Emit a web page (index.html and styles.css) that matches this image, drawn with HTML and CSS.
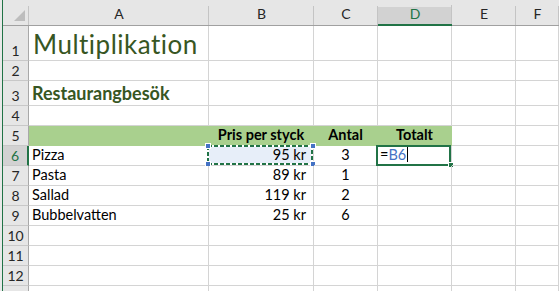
FILE: index.html
```
<!DOCTYPE html>
<html lang="sv">
<head>
<meta charset="utf-8">
<title>Multiplikation</title>
<link rel="stylesheet" href="styles.css">
</head>
<body>
<div class="sheet">
  <div class="edge"></div>

  <div class="corner"><span class="tri"></span></div>
  <div class="colh">A</div>
  <div class="colh">B</div>
  <div class="colh">C</div>
  <div class="colh sel">D</div>
  <div class="colh">E</div>
  <div class="colh">F</div>

  <div class="rowh">1</div>
  <div class="c title">Multiplikation</div>
  <div class="c"></div><div class="c"></div><div class="c"></div><div class="c"></div><div class="c"></div>

  <div class="rowh">2</div>
  <div class="c"></div><div class="c"></div><div class="c"></div><div class="c"></div><div class="c"></div><div class="c"></div>

  <div class="rowh">3</div>
  <div class="c heading">Restaurangbesök</div>
  <div class="c"></div><div class="c"></div><div class="c"></div><div class="c"></div><div class="c"></div>

  <div class="rowh">4</div>
  <div class="c"></div><div class="c"></div><div class="c"></div><div class="c"></div><div class="c"></div><div class="c"></div>

  <div class="rowh">5</div>
  <div class="c band"></div>
  <div class="c band th">Pris per styck</div>
  <div class="c band th">Antal</div>
  <div class="c band th">Totalt</div>
  <div class="c"></div><div class="c"></div>

  <div class="rowh sel">6</div>
  <div class="c">Pizza</div>
  <div class="c num ref">95 kr
    <svg class="marquee" width="106" height="20" viewBox="0 0 106 20"><rect x="1" y="1" width="104" height="18" fill="none" stroke="#ffffff" stroke-width="2"/><rect x="1" y="1" width="104" height="18" fill="none" stroke="#217346" stroke-width="2" stroke-dasharray="4 2"/></svg>
    <span class="hdl tl"></span><span class="hdl tr"></span><span class="hdl bl"></span><span class="hdl br"></span>
  </div>
  <div class="c mid">3</div>
  <div class="c active"><span class="eq">=</span><span class="refx">B6</span><span class="caret"></span><span class="fill"></span></div>
  <div class="c"></div><div class="c"></div>

  <div class="rowh">7</div>
  <div class="c">Pasta</div><div class="c num">89 kr</div><div class="c mid">1</div><div class="c"></div><div class="c"></div><div class="c"></div>

  <div class="rowh">8</div>
  <div class="c">Sallad</div><div class="c num">119 kr</div><div class="c mid">2</div><div class="c"></div><div class="c"></div><div class="c"></div>

  <div class="rowh">9</div>
  <div class="c">Bubbelvatten</div><div class="c num">25 kr</div><div class="c mid">6</div><div class="c"></div><div class="c"></div><div class="c"></div>

  <div class="rowh">10</div>
  <div class="c"></div><div class="c"></div><div class="c"></div><div class="c"></div><div class="c"></div><div class="c"></div>

  <div class="rowh">11</div>
  <div class="c"></div><div class="c"></div><div class="c"></div><div class="c"></div><div class="c"></div><div class="c"></div>

  <div class="rowh">12</div>
  <div class="c"></div><div class="c"></div><div class="c"></div><div class="c"></div><div class="c"></div><div class="c"></div>

  <div class="rowh"></div>
  <div class="c"></div><div class="c"></div><div class="c"></div><div class="c"></div><div class="c"></div><div class="c"></div>
</div>
</body>
</html>
```

FILE: styles.css
```
* { box-sizing: border-box; }
html, body { margin: 0; padding: 0; background: #ffffff; overflow: hidden; }
body { width: 559px; height: 291px; font-family: Lato, "Liberation Sans", sans-serif; }

.sheet {
  display: grid;
  grid-template-columns: 3px 26px 180px 105px 64px 74px 64px 1fr;
  grid-template-rows: 26px 35px 20px 25px 20px 20px 20px 20px 20px 20px 20px 20px 20px 20px;
  width: 559px;
  height: 291px;
  overflow: hidden;
}

.edge {
  grid-row: 1 / -1;
  grid-column: 1;
  background: #e9e9e9;
  border-right: 1px solid #217346;
}

.corner {
  background: linear-gradient(#c4c4c4, #c4c4c4) right bottom / 1px 19px no-repeat, #e6e6e6;
  border-bottom: 1px solid #a0a0a0;
  display: flex;
  justify-content: flex-end;
  align-items: flex-end;
  padding: 0 4px 4px 0;
}
.tri {
  width: 11px;
  height: 11px;
  background: #bdbdbd;
  clip-path: polygon(100% 0, 100% 100%, 0 100%);
}

.colh {
  background: linear-gradient(#c4c4c4, #c4c4c4) right bottom / 1px 19px no-repeat, #e6e6e6;
  border-bottom: 1px solid #a0a0a0;
  display: flex;
  justify-content: center;
  align-items: flex-end;
  padding-bottom: 3px;
  font-size: 14px;
  line-height: 16px;
  color: #262626;
}
.colh.sel {
  background: linear-gradient(#c4c4c4, #c4c4c4) right bottom / 1px 19px no-repeat, linear-gradient(#d2d2d2, #d2d2d2) left 7px / 100% 19px no-repeat, #e6e6e6;
  border-bottom: 2px solid #217346;
  color: #217346;
  padding-bottom: 2px;
}

.rowh {
  background: #e6e6e6;
  border-right: 1px solid #a8a8a8;
  border-bottom: 1px solid #c8c8c8;
  display: flex;
  justify-content: center;
  align-items: flex-end;
  padding-bottom: 1px;
  font-size: 14px;
  line-height: 17px;
  color: #262626;
}
.rowh.sel {
  background: #d2d2d2;
  color: #217346;
  border-right: 2px solid #217346;
}

.c {
  border-right: 1px solid #d4d4d4;
  border-bottom: 1px solid #d4d4d4;
  display: flex;
  align-items: flex-end;
  padding: 0 3px 2px;
  font-size: 14.5px;
  line-height: 17px;
  color: #000000;
  white-space: nowrap;
  position: relative;
}
.c.num { justify-content: flex-end; padding-right: 7px; }
.c.mid { justify-content: center; }

.c.title {
  font-size: 26px;
  line-height: 32px;
  font-weight: 400;
  color: #375623;
  padding-left: 4px;
  padding-bottom: 0;
  letter-spacing: 0.5px;
}
.c.heading {
  font-size: 18px;
  line-height: 22px;
  font-weight: 700;
  color: #375623;
  padding-left: 3px;
  padding-bottom: 1px;
}

.c.band {
  background: #a9d08e;
  border-color: #a9d08e;
}
.c.th { justify-content: center; font-weight: 700; }

.c.ref { background: #e7eef9; }
.marquee { position: absolute; left: -2px; top: -1px; }
.hdl {
  position: absolute;
  width: 6px;
  height: 6px;
  background: #4472c4;
  border: 1px solid #ffffff;
}
.hdl.tl { left: -4px; top: -3px; }
.hdl.tr { right: -3px; top: -3px; }
.hdl.bl { left: -4px; bottom: -2px; }
.hdl.br { right: -3px; bottom: -2px; }

.c.active { padding-left: 2px; }
.c.active::before {
  content: "";
  position: absolute;
  left: -2px;
  top: -1px;
  right: 0;
  bottom: -1px;
  border: 2px solid #217346;
}
.refx { color: #4472c4; }
.caret {
  display: inline-block;
  width: 1px;
  height: 15px;
  background: #000000;
  margin-left: 1px;
  align-self: flex-end;
  margin-bottom: 1px;
}
.fill {
  position: absolute;
  right: -3px;
  bottom: -3px;
  width: 6px;
  height: 6px;
  background: #217346;
  border: 1px solid #ffffff;
}
```
